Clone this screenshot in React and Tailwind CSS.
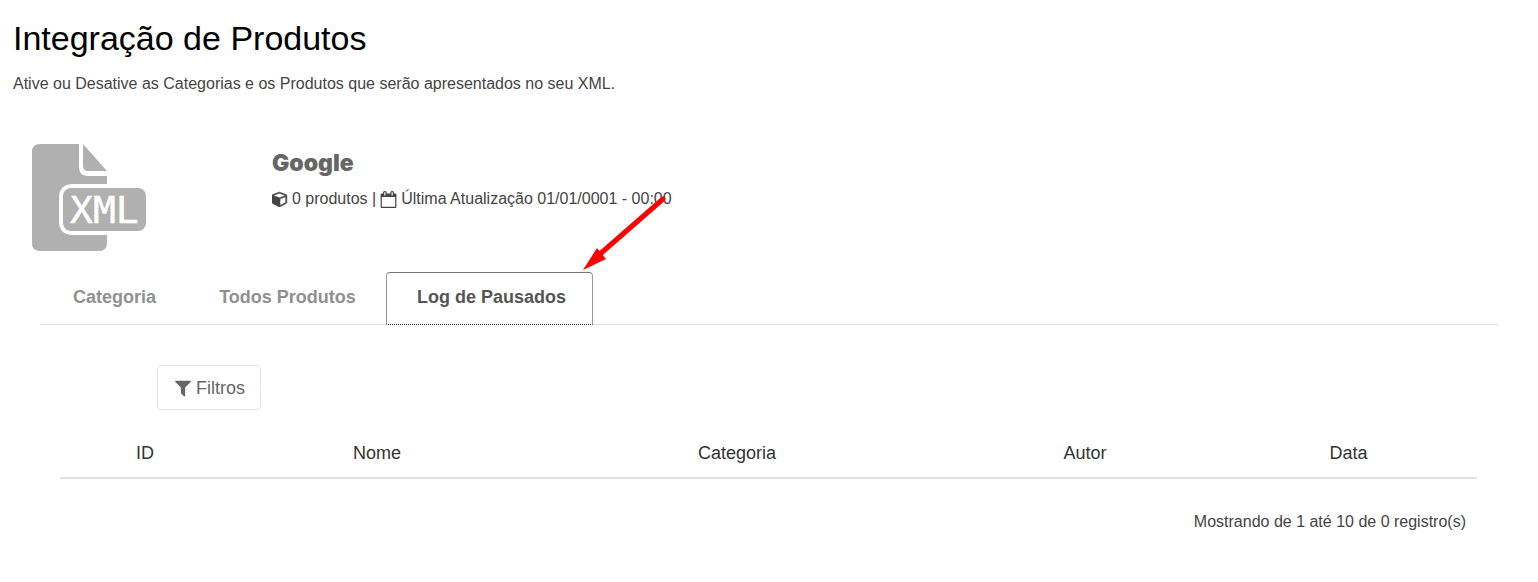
import { useState } from "react";

const tabs = [
    { id: "categoria", nome: "Categoria", width: "w-[149px]" },
    { id: "todos", nome: "Todos Produtos", width: "w-[197px]" },
    { id: "log", nome: "Log de Pausados", width: "w-[207px]" },
];

const colunas = [
    { nome: "ID", width: "w-[170px]" },
    { nome: "Nome", width: "w-[294px]" },
    { nome: "Categoria", width: "w-[426px]" },
    { nome: "Autor", width: "w-[270px]" },
    { nome: "Data", width: "w-[257px]" },
];

function Icon({ path, className }) {
    return (
        <svg viewBox="0 0 1792 1792" fill="currentColor" className={className} aria-hidden="true">
            <path d={path} />
        </svg>
    );
}

const cubePath = "M896 1629l640-349v-636l-640 233v752zm-64-865l698-254-698-254-698 254zm832-252v768q0 35-18 65t-49 47l-704 384q-28 16-61 16t-61-16l-704-384q-31-17-49-47t-18-65v-768q0-40 23-73t61-47l704-256q22-8 44-8t44 8l704 256q38 14 61 47t23 73z";
const calendarPath = "M192 1664h1408v-1024h-1408v1024zM576 448v-288q0-14-9-23t-23-9h-64q-14 0-23 9t-9 23v288q0 14 9 23t23 9h64q14 0 23-9t9-23zm768 0v-288q0-14-9-23t-23-9h-64q-14 0-23 9t-9 23v288q0 14 9 23t23 9h64q14 0 23-9t9-23zm384-64v1280q0 52-38 90t-90 38h-1408q-52 0-90-38t-38-90v-1280q0-52 38-90t90-38h128v-96q0-66 47-113t113-47h64q66 0 113 47t47 113v96h384v-96q0-66 47-113t113-47h64q66 0 113 47t47 113v96h128q52 0 90 38t38 90z";
const filterPath = "M1595 295q17 41-14 70l-493 493v742q0 42-39 59-13 5-25 5-27 0-45-19l-256-256q-19-19-19-45v-486l-493-493q-31-29-14-70 17-39 59-39h1280q42 0 59 39z";

function XmlLogo() {
    return (
        <svg width="114" height="107" viewBox="0 0 114 107" fill="#b0b0b0" aria-label="XML">
            <path d="M8 0H47V23Q47 32 56 32H75V40H41Q27 40 27 54V77Q27 91 41 91H75V99Q75 107 67 107H8Q0 107 0 99V8Q0 0 8 0Z" />
            <path d="M51 0L75 27H56Q51 27 51 22Z" />
            <rect x="31" y="44" width="83" height="43" rx="8" />
            <text
                x="38"
                y="79"
                fill="#fff"
                stroke="#fff"
                strokeWidth="0.5"
                className="font-['DejaVu_Sans_Mono',monospace] text-[38px]"
            >
                XML
            </text>
        </svg>
    );
}

export default function IntegracaoProdutos() {
    const [ativa, setAtiva] = useState("log");

    return (
        <div className="bg-white px-[13px] pt-[18px] font-['Liberation_Sans',Arial,sans-serif] text-base text-[#444]">
            <h1 className="text-[34px] leading-10 text-black">Integração de Produtos</h1>
            <p className="mt-[14px] leading-6">
                Ative ou Desative as Categorias e os Produtos que serão apresentados no seu XML.
            </p>

            <div className="mt-12 flex px-[19px]">
                <div className="w-[240px]">
                    <XmlLogo />
                </div>
                <div className="pt-[5px]">
                    <h2 className="font-[Inter,sans-serif] text-[23px] leading-7 font-black text-[#666]">Google</h2>
                    <p className="mt-[10px] flex items-center gap-1 leading-6">
                        <Icon path={cubePath} className="size-4 stroke-current stroke-[60]" />
                        <span>0 produtos |</span>
                        <Icon path={calendarPath} className="size-[17px]" />
                        <span>Última Atualização 01/01/0001 - 00:00</span>
                    </p>
                </div>
            </div>

            <div className="mx-[27px] mt-[21px] flex border-b border-[#ddd]" role="tablist">
                {tabs.map((tab) => (
                    <div key={tab.id} className={`relative ${tab.width}`}>
                        <button
                            type="button"
                            role="tab"
                            aria-selected={ativa === tab.id}
                            onClick={() => setAtiva(tab.id)}
                            className={
                                ativa === tab.id
                                    ? "-mb-px h-[53px] w-full rounded-t border border-[#999] border-t-[#777] border-b-[#333] [border-bottom-style:dotted] bg-white pb-[3px] pl-1 text-lg font-bold text-[#555]"
                                    : "h-[52px] w-full pb-0.5 text-lg font-bold text-[#909090]"
                            }
                        >
                            {tab.nome}
                        </button>
                        {tab.id === "log" && (
                            <svg
                                width="90"
                                height="78"
                                viewBox="0 0 90 78"
                                className="pointer-events-none absolute bottom-full left-full -ml-[13px]"
                                aria-hidden="true"
                            >
                                <path d="M83 5L20 60" stroke="#f00" strokeWidth="5" strokeLinecap="round" />
                                <path d="M3 76L17 54L26 65Z" fill="#f00" />
                            </svg>
                        )}
                    </div>
                ))}
            </div>

            <div className="pr-12 pl-[47px] pt-10">
                <button
                    type="button"
                    className="ml-[97px] flex h-[45px] items-center gap-[3px] rounded border border-[#e7e7e7] px-[15px] text-lg text-[#666]"
                >
                    <Icon path={filterPath} className="size-5" />
                    Filtros
                </button>

                <table className="mt-[18px] w-full table-fixed border-b-2 border-[#dee2e6]">
                    <thead>
                        <tr>
                            {colunas.map((coluna) => (
                                <th key={coluna.nome} className={`h-[50px] text-lg font-normal text-[#333] ${coluna.width}`}>
                                    {coluna.nome}
                                </th>
                            ))}
                        </tr>
                    </thead>
                </table>

                <p className="mt-[31px] pr-[11px] text-right leading-6">Mostrando de 1 até 10 de 0 registro(s)</p>
            </div>
        </div>
    );
}
